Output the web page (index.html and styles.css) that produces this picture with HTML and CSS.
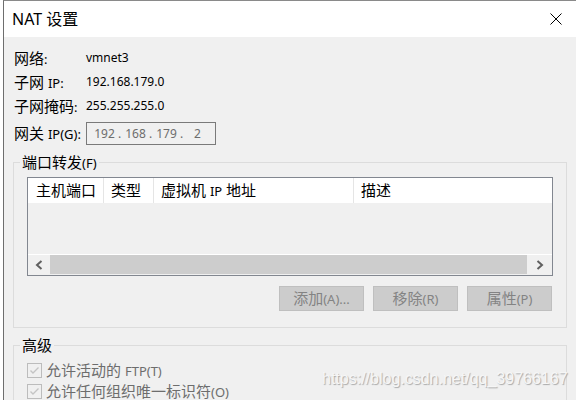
FILE: index.html
```html
<!DOCTYPE html>
<html lang="zh-CN">
<head>
  <meta charset="UTF-8">
  <title>NAT 设置</title>
  <link rel="stylesheet" href="styles.css">
</head>
<body>
  <div class="window">
    <div class="titlebar">
      <span class="title">NAT 设置</span>
      <svg class="close" width="12" height="12" viewBox="0 0 12 12">
        <path d="M0.5 0.5 L11.5 11.5 M11.5 0.5 L0.5 11.5" stroke="#000" stroke-width="1" fill="none"/>
      </svg>
    </div>

    <div class="info">
      <div class="row"><span class="label">网络<span class="lat">:</span></span><span class="value">vmnet3</span></div>
      <div class="row"><span class="label">子网 <span class="lat">IP:</span></span><span class="value">192.168.179.0</span></div>
      <div class="row"><span class="label">子网掩码<span class="lat">:</span></span><span class="value">255.255.255.0</span></div>
      <div class="row gateway">
        <span class="label">网关 <span class="lat">IP(G):</span></span>
        <div class="ip-box">
          <span class="field">192</span><span class="dot">.</span>
          <span class="field">168</span><span class="dot">.</span>
          <span class="field">179</span><span class="dot">.</span>
          <span class="field">2</span>
        </div>
      </div>
    </div>

    <fieldset class="group">
      <legend>端口转发<span class="lat">(F)</span></legend>
      <div class="listview">
        <div class="lv-header">
          <div class="col c1">主机端口</div>
          <div class="col c2">类型</div>
          <div class="col c3">虚拟机 <span class="lat">IP</span> 地址</div>
          <div class="col c4">描述</div>
        </div>
        <div class="lv-body"></div>
        <div class="hscroll">
          <div class="arrow"><svg width="8" height="10" viewBox="0 0 8 10"><polyline points="6.5,1 2,5 6.5,9" fill="none" stroke="#606060" stroke-width="2"/></svg></div>
          <div class="thumb"></div>
          <div class="arrow right"><svg width="8" height="10" viewBox="0 0 8 10"><polyline points="1.5,1 6,5 1.5,9" fill="none" stroke="#606060" stroke-width="2"/></svg></div>
        </div>
      </div>
      <div class="buttons">
        <button disabled>添加<span class="lat">(A)...</span></button>
        <button disabled>移除<span class="lat">(R)</span></button>
        <button disabled>属性<span class="lat">(P)</span></button>
      </div>
    </fieldset>

    <fieldset class="group advanced">
      <legend>高级</legend>
      <label class="check first">
        <span class="box"><svg width="13" height="13" viewBox="0 0 13 13"><polyline points="2.5,6.5 5,9 10.5,3.5" fill="none" stroke="#c4c4c4" stroke-width="1.4"/></svg></span>
        <span class="txt">允许活动的 <span class="lat">FTP(T)</span></span>
      </label>
      <label class="check">
        <span class="box"><svg width="13" height="13" viewBox="0 0 13 13"><polyline points="2.5,6.5 5,9 10.5,3.5" fill="none" stroke="#c4c4c4" stroke-width="1.4"/></svg></span>
        <span class="txt">允许任何组织唯一标识符<span class="lat">(O)</span></span>
      </label>
    </fieldset>

    <div class="watermark">https://blog.csdn.net/qq_39766167</div>
  </div>
</body>
</html>
```

FILE: styles.css
```css
body {
  margin: 0;
  background: #fff;
  font-family: "Noto Sans", "Noto Sans CJK SC", sans-serif;
  font-size: 15px;
  line-height: 18px;
  color: #000;
  overflow: hidden;
}

.window {
  position: relative;
  margin-left: 3px;
  height: 399px;
  border-left: 1px solid #6e6e6e;
  border-top: 1px solid #8a8a8a;
  background: #f0f0f0;
  overflow: hidden;
}

.titlebar {
  height: 36px;
  background: #fff;
  display: flex;
  align-items: center;
  justify-content: space-between;
  padding: 0 14px 0 8px;
}

.title {
  font-size: 16px;
  line-height: 20px;
}

.lat {
  font-size: 13px;
}

/* info rows */
.info {
  padding: 9px 0 0 10px;
}

.row {
  display: flex;
  align-items: center;
  height: 24px;
}

.label {
  width: 72px;
  flex: none;
  white-space: nowrap;
}

.value {
  font-size: 12px;
}

.gateway {
  margin-top: 4px;
  height: 23px;
}

.ip-box {
  width: 130px;
  height: 23px;
  box-sizing: border-box;
  border: 1px solid #7a7a7a;
  padding-left: 7px;
  display: flex;
  align-items: center;
  font-size: 12px;
  color: #6d6d6d;
}

.field {
  width: 21px;
  text-align: center;
}

.dot {
  width: 10px;
  padding-left: 3px;
  box-sizing: border-box;
}

/* group boxes */
.group {
  margin: 8px 0 0 9px;
  width: 554px;
  box-sizing: border-box;
  border: 1px solid #dcdcdc;
  padding: 0 0 16px 0;
  min-width: 0;
}

.group legend {
  margin-left: 6px;
  padding: 0 2px;
  line-height: 18px;
}

.listview {
  margin: 5px 13px 0;
  border: 1px solid #828790;
  height: 99px;
  box-sizing: border-box;
  display: flex;
  flex-direction: column;
}

.lv-header {
  height: 25px;
  flex: none;
  background: #fff;
  display: flex;
}

.col {
  box-sizing: border-box;
  border-right: 1px solid #e5e5e5;
  padding-left: 7px;
  line-height: 24px;
  white-space: nowrap;
}

.c1 { width: 76px; padding-left: 8px; }
.c2 { width: 50px; }
.c3 { width: 200px; }
.c4 { flex: 1; border-right: none; }

.lv-body {
  flex: 1;
}

.hscroll {
  height: 20px;
  flex: none;
  border-top: 1px solid #fff;
  display: flex;
}

.arrow {
  width: 22px;
  display: flex;
  align-items: center;
  justify-content: center;
}

.arrow svg {
  margin-bottom: 1px;
}

.arrow.right {
  width: 25px;
}

.thumb {
  flex: 1;
  background: #cdcdcd;
  margin-bottom: 1px;
}

.buttons {
  display: flex;
  justify-content: flex-end;
  gap: 9px;
  margin: 10px 14px 0 13px;
}

.buttons button {
  width: 85px;
  height: 25px;
  border: 1px solid #bfbfbf;
  background: #ccc;
  color: #838383;
  font: inherit;
  line-height: 23px;
  padding: 0;
}

.advanced {
  height: 120px;
}

.check {
  display: flex;
  align-items: center;
  gap: 4px;
  height: 21px;
  margin-left: 13px;
  color: #6d6d6d;
}

.check.first {
  margin-top: 6px;
}

.check .txt {
  white-space: nowrap;
}

.box {
  width: 15px;
  height: 15px;
  box-sizing: border-box;
  border: 1px solid #bcbcbc;
  background: #f0f0f0;
  display: flex;
  align-items: center;
  justify-content: center;
}

.watermark {
  position: absolute;
  left: 318px;
  top: 368px;
  font-family: "Liberation Sans", sans-serif;
  font-size: 16px;
  line-height: 20px;
  color: #f6f6f6;
  text-shadow: 1px 1px 1px #a8a8a8;
  white-space: nowrap;
}
```
